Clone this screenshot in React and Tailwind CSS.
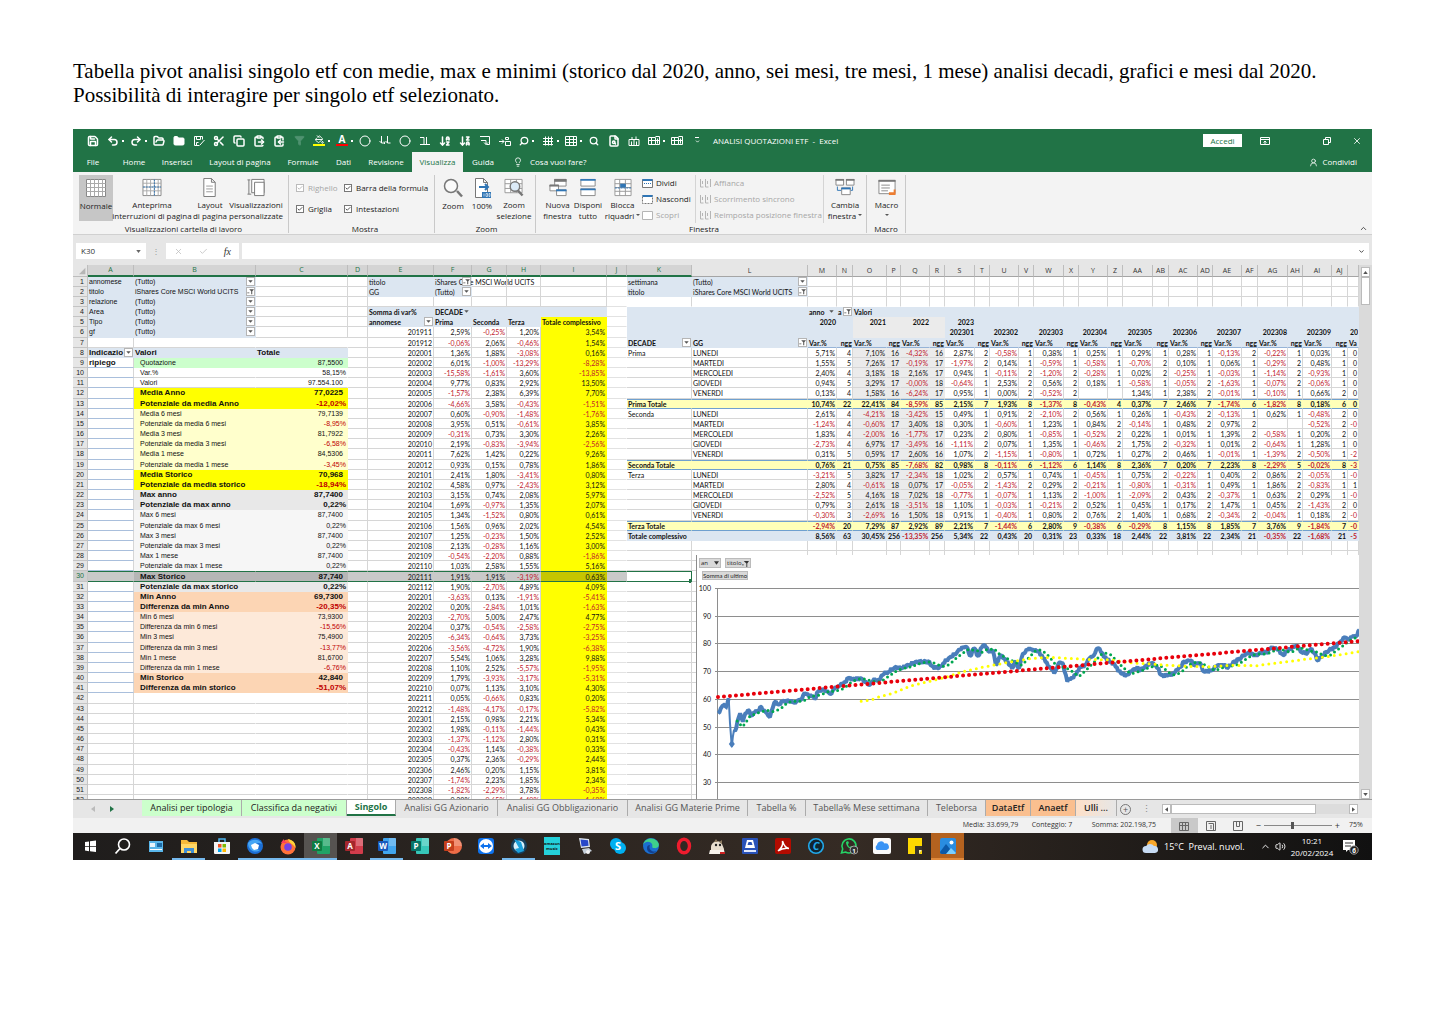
import React from "react";
import {
  Save, Undo2, Redo2, FolderOpen, Folder, Scissors, Copy, ClipboardPaste, ClipboardCopy, Filter, PaintBucket,
  Circle, ArrowDownAZ, ArrowDownZA, Search, Lightbulb, UserRound, X, Check,
  ChevronUp, ChevronDown, Volume2, FileSearch,
} from "lucide-react";

/* ---------- sheet data ---------- */

const COLS = [
  ["A", "w-[46px]"], ["B", "w-[122px]"], ["C", "w-[92px]"], ["D", "w-[20px]"], ["E", "w-[66px]"], ["F", "w-[38px]"],
  ["G", "w-[35px]"], ["H", "w-[34px]"], ["I", "w-[66px]"], ["J", "w-[20px]"], ["K", "w-[65px]"], ["L", "w-[116px]"],
  ["M", "w-[29px]"], ["N", "w-[16px]"], ["O", "w-[34px]"], ["P", "w-[14px]"], ["Q", "w-[29px]"], ["R", "w-[15px]"],
  ["S", "w-[30px]"], ["T", "w-[15px]"], ["U", "w-[29px]"], ["V", "w-[15px]"], ["W", "w-[30px]"], ["X", "w-[15px]"],
  ["Y", "w-[29px]"], ["Z", "w-[15px]"], ["AA", "w-[30px]"], ["AB", "w-[16px]"], ["AC", "w-[29px]"], ["AD", "w-[15px]"],
  ["AE", "w-[29px]"], ["AF", "w-[16px]"], ["AG", "w-[30px]"], ["AH", "w-[15px]"], ["AI", "w-[29px]"], ["AJ", "w-[16px]"],
  ["AK", ""],
];
const NAMES = COLS.map((c) => c[0]);

const SUMMARY = [
  ["Quotazione", "87,5500", "green"],
  ["Var.%", "58,15%", "plain"],
  ["Valori", "97.554.100", "plain"],
  ["Media Anno", "77,0225", "yellow"],
  ["Potenziale da media Anno", "-12,02%", "yellow"],
  ["Media 6 mesi", "79,7139", "cream"],
  ["Potenziale da media 6 mesi", "-8,95%", "cream"],
  ["Media 3 mesi", "81,7922", "cream"],
  ["Potenziale da media 3 mesi", "-6,58%", "cream"],
  ["Media 1 mese", "84,5306", "cream"],
  ["Potenziale da media 1 mese", "-3,45%", "cream"],
  ["Media Storico", "70,968", "yellow"],
  ["Potenziale da media storico", "-18,94%", "yellow"],
  ["Max anno", "87,7400", "gray"],
  ["Potenziale da max anno", "0,22%", "gray"],
  ["Max 6 mesi", "87,7400", "light"],
  ["Potenziale da max 6 mesi", "0,22%", "light"],
  ["Max 3 mesi", "87,7400", "light"],
  ["Potenziale da max 3 mesi", "0,22%", "light"],
  ["Max 1 mese", "87,7400", "light"],
  ["Potenziale da max 1 mese", "0,22%", "light"],
  ["Max Storico", "87,740", "gray"],
  ["Potenziale da max storico", "0,22%", "gray"],
  ["Min Anno", "69,7300", "orange"],
  ["Differenza da min Anno", "-20,35%", "orange"],
  ["Min 6 mesi", "73,9300", "peach"],
  ["Differenza da min 6 mesi", "-15,56%", "peach"],
  ["Min 3 mesi", "75,4900", "peach"],
  ["Differenza da min 3 mesi", "-13,77%", "peach"],
  ["Min 1 mese", "81,6700", "peach"],
  ["Differenza da min 1 mese", "-6,76%", "peach"],
  ["Min Storico", "42,840", "orange"],
  ["Differenza da min storico", "-51,07%", "orange"],
];
const TONE = {
  green: "bg-[#ccffcc]", plain: "bg-white", yellow: "bg-[#ffff00] font-bold", cream: "bg-[#ffffcc]",
  gray: "bg-[#e8e8e8] font-bold", light: "bg-[#f6f6f6]", orange: "bg-[#fcd5b4] font-bold", peach: "bg-[#fde9d9]",
};

const MONTHS = `201911 2,59 -0,25 1,20 3,54
201912 -0,06 2,06 -0,46 1,54
202001 1,36 1,88 -3,08 0,16
202002 6,01 -1,00 -13,29 -8,28
202003 -15,58 -1,61 3,60 -13,85
202004 9,77 0,83 2,92 13,50
202005 -1,57 2,38 6,39 7,70
202006 -4,66 3,58 -0,43 -1,51
202007 0,60 -0,90 -1,48 -1,76
202008 3,95 0,51 -0,61 3,85
202009 -0,31 0,73 3,30 2,26
202010 2,19 -0,83 -3,94 -2,56
202011 7,62 1,42 0,22 9,26
202012 0,93 0,15 0,78 1,86
202101 2,41 1,80 -3,41 0,80
202102 4,58 0,97 -2,43 3,12
202103 3,15 0,74 2,08 5,97
202104 1,69 -0,97 1,35 2,07
202105 1,34 -1,52 0,80 0,61
202106 1,56 0,96 2,02 4,54
202107 1,25 -0,23 1,50 2,52
202108 2,13 -0,28 1,16 3,00
202109 -0,54 -2,20 0,88 -1,86
202110 1,03 2,58 1,55 5,16
202111 1,91 1,91 -3,19 0,63
202112 1,90 -2,70 4,89 4,09
202201 -3,63 0,13 -1,91 -5,41
202202 0,20 -2,84 1,01 -1,63
202203 -2,70 5,00 2,47 4,77
202204 0,37 -0,54 -2,58 -2,75
202205 -6,34 -0,64 3,73 -3,25
202206 -3,56 -4,72 1,90 -6,38
202207 5,54 1,06 3,28 9,88
202208 1,10 2,52 -5,57 -1,95
202209 1,79 -3,93 -3,17 -5,31
202210 0,07 1,13 3,10 4,30
202211 0,05 -0,66 0,83 0,20
202212 -1,48 -4,17 -0,17 -5,82
202301 2,15 0,98 2,21 5,34
202302 1,98 -0,11 -1,44 0,43
202303 -1,37 -1,12 2,80 0,31
202304 -0,43 1,14 -0,38 0,33
202305 0,37 2,36 -0,29 2,44
202306 2,46 0,20 1,15 3,81
202307 -1,74 2,23 1,85 2,34
202308 -1,82 -2,29 3,78 -0,35
202309 0,38 -0,65 -1,40 -1,68`.split("\n").map((l) => l.split(" "));

const DAYS = `5,71 4 7,10 16 -4,32 16 2,87 2 -0,58 1 0,38 1 0,25 1 0,29 1 0,28 1 -0,13 2 -0,22 1 0,03 1 0
1,55 5 7,26 17 -0,19 17 -1,97 2 0,14 1 -0,59 1 -0,58 1 -0,70 2 0,10 1 0,06 1 -0,29 2 0,48 1 0
2,40 4 3,18 18 2,16 17 0,94 1 -0,11 2 -1,20 2 -0,28 1 0,02 2 -0,25 1 -0,03 1 -1,14 2 -0,93 1 0
0,94 5 3,29 17 -0,00 18 -0,64 1 2,53 2 0,56 2 0,18 1 -0,58 1 -0,05 2 -1,63 1 -0,07 2 -0,06 1 0
0,13 4 1,58 16 -6,24 17 0,95 1 0,00 2 -0,52 2 . . 1,34 1 2,38 2 -0,01 1 -0,10 1 0,66 2 0
10,74 22 22,41 84 -8,59 85 2,15 7 1,93 8 -1,37 8 -0,43 4 0,37 7 2,46 7 -1,74 6 -1,82 8 0,18 6 0
2,61 4 -4,21 18 -3,42 15 0,49 1 0,91 2 -2,10 2 0,56 1 0,26 1 -0,43 2 -0,13 1 0,62 1 -0,48 2 0
-1,24 4 -0,60 17 3,40 18 0,30 1 -0,60 1 1,23 1 0,84 2 -0,14 1 0,48 2 0,97 2 . . -0,52 2 -0
1,83 4 -2,00 16 -1,77 17 0,23 2 0,80 1 -0,85 1 -0,52 2 0,22 1 0,01 1 1,39 2 -0,58 1 0,20 2 0
-2,73 4 6,97 17 -3,49 16 -1,11 2 0,07 1 1,35 1 -0,46 2 1,75 2 -0,32 1 0,01 2 -0,64 1 1,28 1 0
0,31 5 0,59 17 2,60 16 1,07 2 -1,15 1 -0,80 1 0,72 1 0,27 2 0,46 1 -0,01 1 -1,39 2 -0,50 1 -2
0,76 21 0,75 85 -7,68 82 0,98 8 -0,11 6 -1,12 6 1,14 8 2,36 7 0,20 7 2,23 8 -2,29 5 -0,02 8 -3
-3,21 5 3,82 17 -2,34 18 1,02 2 0,57 1 0,74 1 -0,45 1 0,75 2 -0,22 1 0,40 2 0,86 2 -0,05 1 -0
2,80 4 -0,61 18 0,07 17 -0,05 2 -1,43 2 0,29 2 -0,21 1 -0,80 1 -0,31 1 0,49 1 1,86 2 -0,83 1 1
-2,52 5 4,16 18 7,02 18 -0,77 1 -0,07 1 1,13 2 -1,00 1 -2,09 2 0,43 2 -0,37 1 0,63 2 0,29 1 -0
0,79 3 2,61 18 -3,51 18 1,10 1 -0,03 1 -0,21 2 0,52 1 0,45 1 0,17 2 1,47 1 0,45 2 -1,43 2 0
-0,30 3 -2,69 16 1,50 18 0,91 1 -0,40 1 0,80 2 0,76 2 1,40 1 0,68 2 -0,34 2 -0,04 1 0,18 2 -0
-2,94 20 7,29 87 2,92 89 2,21 7 -1,44 6 2,80 9 -0,38 6 -0,29 8 1,15 8 1,85 7 3,76 9 -1,84 7 -0
8,56 63 30,45 256 -13,35 256 5,34 22 0,43 20 0,31 23 0,33 18 2,44 22 3,81 22 2,34 21 -0,35 22 -1,68 21 -5`
  .split("\n").map((l) => l.split(" "));
const DAY_NAMES = ["LUNEDI", "MARTEDI", "MERCOLEDI", "GIOVEDI", "VENERDI"];

const TEXT = {
  A1: "annomese", B1: "(Tutto)", A2: "titolo", B2: "iShares Core MSCI World UCITS", A3: "relazione", B3: "(Tutto)",
  A4: "Area", B4: "(Tutto)", A5: "Tipo", B5: "(Tutto)", A6: "gf", B6: "(Tutto)",
  A8: "Indicazio", B8: "Valori", C8: "Totale", A9: "ripiego",
  E1: "titolo", F1: "iShares Core MSCI World UCITS", E2: "GG", F2: "(Tutto)", E4: "Somma di var%", F4: "DECADE",
  E5: "annomese", F5: "Prima", G5: "Seconda", H5: "Terza", I5: "Totale complessivo",
  K1: "settimana", L1: "(Tutto)", K2: "titolo", L2: "iShares Core MSCI World UCITS",
  M4: "anno", N4: "a", O4: "Valori", K7: "DECADE", L7: "GG",
  M5: "2020", O5: "2021", Q5: "2022", S5: "2023",
  K8: "Prima", K13: "Prima Totale", K14: "Seconda", K19: "Seconda Totale", K20: "Terza", K25: "Terza Totale",
  K26: "Totale complessivo",
};
"S U W Y AA AC AE AG AI".split(" ").forEach((c, i) => { TEXT[c + "6"] = "20230" + (i + 1); });
TEXT.AK6 = "20";
[8, 14, 20].forEach((start) => DAY_NAMES.forEach((d, i) => { TEXT["L" + (start + i)] = d; }));
const FILTERS = {
  B1: "v", B2: "f", B3: "v", B4: "v", B5: "v", B6: "v", A8: "v", F1: "f", F2: "v", F4: "n", E5: "v",
  L1: "v", L2: "f", M4: "n", N4: "f", K7: "v", L7: "f",
};

function cellInfo(col, row) {
  const c = NAMES.indexOf(col);
  const key = col + row;
  let text = TEXT[key] ?? "";
  let cls = "";
  let grid = "border-b-[#d6d6d6] border-r-[#d6d6d6]";
  const none = "border-transparent bg-clip-border";
  const blue = "bg-[#dce6f1]";

  if (c <= 2) {
    let size = "text-[8px]";
    cls = "font-['Liberation_Sans',sans-serif]";
    if (row <= 6) {
      if (c < 2) { size = "text-[7px]"; cls += " " + blue; grid = none; }
    } else if (row === 8) { cls += " font-bold " + blue; grid = none; }
    else if (row >= 9 && row <= 41) {
      if (c === 0) { grid = "border-b-[#a9bfdc] border-r-[#d6d6d6]"; if (row === 9) cls += " font-bold"; }
      else {
        const [label, val, tone] = SUMMARY[row - 9];
        text = c === 1 ? label : val;
        const bold = TONE[tone].includes("bold");
        if (!bold) size = "text-[7px]";
        cls += " " + TONE[tone] + (c === 1 ? " pl-[6px]" : " text-right");
        if (c === 2) cls += val.endsWith("%") ? " pr-[1px]" : " pr-[4px]";
        if (c === 2 && val[0] === "-") cls += " text-[#c00000]";
        grid = row === 10 || row === 11 ? "border-b-[#d6d6d6] border-r-transparent" : none;
      }
    } else if (c > 0) grid = "border-b-[#d6d6d6] border-r-transparent";
    cls += " " + size;
  } else {
    cls = "font-['Lato',sans-serif] text-[7px]";
    if (c >= 4 && c <= 8) {
      if ((row <= 2 && c <= 5) || row === 4 || (row === 5 && c < 8)) { cls += " " + blue; grid = none; }
      if (row === 4 || row === 5) cls += " font-bold";
      if (row >= 6) {
        const v = MONTHS[row - 6][c - 4];
        text = c === 4 ? v : v + "%";
        cls += " text-right pr-[1px]" + (v[0] === "-" ? " text-[#c0202c]" : "");
      }
      if (c === 8 && row >= 5) { cls += " bg-[#ffff00]"; grid = none; }
    }
    if (c === 9) grid = "border-b-[#e2e2e2] border-r-transparent";
    if (c >= 10) {
      if (row <= 2 && c <= 11) { cls += " " + blue; grid = none; }
      if (row >= 4 && row <= 7) { cls += " font-bold " + blue; grid = none; }
      if ((row === 5 || row === 6) && c >= 12) cls += " text-right";
      if (row === 7 && c >= 12) {
        text = c === 36 ? "Va" : c % 2 === 0 ? "Var.%" : "ngg";
        if (c % 2) cls += " text-right";
        grid = "border-b-[#95b3d7] border-r-transparent";
      }
      if (row >= 8 && row <= 26) {
        const total = row === 13 || row === 19 || row === 25;
        if (c >= 12) {
          const v = DAYS[row - 8][c - 12];
          const pct = c % 2 === 0 && c !== 36;
          text = v === "." ? "" : pct ? v + "%" : v;
          cls += " text-right pr-[1px]" + (v[0] === "-" ? " text-[#c0202c]" : "");
        }
        if (total) { cls += " font-bold bg-[#ffffb8] border-t border-t-[#6fa0cf]"; grid = "border-b-[#6fa0cf] border-r-transparent"; }
        if (row === 26) { cls += " font-bold " + blue; grid = none; }
      }
      if ((row === 5 || row === 6 || (row >= 8 && row <= 24 && row !== 13 && row !== 19)) && c >= 14 && c <= 17) {
        cls = cls.replace(blue, "") + " bg-[#ebebeb]";
        if (row >= 8) grid = "border-b-[#d6d6d6] border-r-transparent";
      }
      if (row === 3) grid = "border-b-transparent border-r-[#d6d6d6]";
    }
  }
  if (row === 30 && c <= 10) {
    grid = "border-b-[#217346] border-t border-t-[#217346] " + (c === 10 ? "border-r-[#217346]" : "border-r-transparent");
    cls = cls.replace(/bg-\[#[0-9a-f]+\]/g, "");
    cls += c === 1 || c === 2 ? " bg-[#b6b6b6]" : c === 8 ? " bg-[#c6c600]" : c === 10 ? " bg-white" : " bg-[#c9c9c9]";
  }
  return { text, cls, grid };
}

function FilterButton({ kind, name }) {
  return (
    <button aria-label={"Filtro " + name} className={"absolute right-0 top-0 flex h-[9px] w-[9px] items-center justify-center " + (kind === "n" ? "" : "border border-[#b5b5b5] bg-white")}>
      {kind === "f" ? (
        <svg viewBox="0 0 8 8" className="h-[7px] w-[7px]" fill="#555"><path d="M2.5 1.5h5.5l-2 2.2V7h-1.2V3.700zM.3 5h2.400v1H.3z" /></svg>
      ) : (
        <svg viewBox="0 0 8 8" className="h-[7px] w-[7px]" fill="#555"><path d="M1.500 2.500h5L4 5.500z" /></svg>
      )}
    </button>
  );
}

function Sheet() {
  return (
    <table className="-mb-[6px] w-full table-fixed border-separate border-spacing-0 bg-white text-[#111]">
      <colgroup>
        <col className="w-[15px]" />
        {COLS.map(([n, w]) => <col key={n} className={w} />)}
      </colgroup>
      <thead>
        <tr className="h-[12px] font-['Open_Sans',sans-serif] text-[7px] leading-[10px] text-[#333]">
          <th className="border-b border-r border-[#bdbdbd] bg-[#e6e6e6] p-0">
            <svg viewBox="0 0 15 10" className="ml-auto h-[8px] w-[12px]" fill="#b5b5b5"><path d="M13 1v8H5z" /></svg>
          </th>
          {NAMES.map((n, i) => (
            <th key={n} scope="col" className={"overflow-hidden border-r border-r-[#bdbdbd] p-0 font-normal " + (i <= 10 ? "border-b-2 border-b-[#217346] bg-[#d4d4d4] text-[#217346]" : "border-b border-b-[#a5a5a5] bg-[#e6e6e6]")}>
              {n === "AK" ? "" : n}
            </th>
          ))}
        </tr>
      </thead>
      <tbody>
        {Array.from({ length: 52 }, (_, i) => i + 1).map((row) => (
          <tr key={row} className={row % 6 === 0 ? "h-[11px]" : "h-[10px]"}>
            <th scope="row" className={"border-b border-r border-[#c4c4c4] p-0 pr-[3px] text-right font-['Liberation_Sans',sans-serif] text-[7px] font-normal leading-[8px] " + (row === 30 ? "bg-[#d0d0d0] text-[#217346]" : "bg-[#e6e6e6] text-[#222]")}>{row}</th>
            {NAMES.map((col) => {
              const { text, cls, grid } = cellInfo(col, row);
              const kind = FILTERS[col + row];
              return (
                <td key={col} className={"relative whitespace-nowrap border-b border-r p-0 pl-[1px] leading-[8px] " + cls + " " + grid + (col === "AK" ? " overflow-hidden" : "")}>
                  {text}
                  {kind && <FilterButton kind={kind} name={col + row} />}
                  {col === "K" && row === 30 && <span className="absolute -bottom-[2px] -right-[1px] h-[4px] w-[3px] bg-[#217346]" />}
                </td>
              );
            })}
          </tr>
        ))}
      </tbody>
    </table>
  );
}

/* ---------- chart ---------- */

const PRICE = [62,490,68,475,75,465,80,470,86,445,89,520,93,590,98,540,103,535,108,505,112,490,118,515,124,490,130,480,136,495,145,488,152,485,158,470,166,480,173,490,180,502,186,475,190,458,200,462,210,455,222,452,232,458,240,455,250,450,256,435,265,430,275,440,282,447,290,425,298,418,310,422,320,432,330,410,340,408,350,395,360,385,372,388,388,385,398,395,405,405,415,392,428,388,440,372,450,365,465,352,480,355,495,345,510,338,525,335,540,335,552,350,565,355,575,340,590,322,605,310,618,290,628,290,636,318,645,295,655,318,663,292,670,285,678,305,688,300,695,345,705,318,715,325,725,345,732,355,740,335,748,355,757,310,768,300,778,297,790,305,800,315,808,335,818,350,828,370,838,340,848,340,858,395,868,382,878,375,886,350,895,352,905,330,915,320,928,295,938,310,948,330,958,335,968,350,980,370,992,375,1005,365,1018,350,1025,362,1038,345,1050,340,1060,345,1072,375,1085,378,1098,370,1110,360,1125,335,1138,332,1148,345,1160,338,1170,365,1185,362,1198,350,1210,342,1225,352,1240,335,1255,322,1265,310,1278,310,1290,318,1300,308,1315,305,1325,290,1338,300,1350,315,1362,300,1380,285,1390,305,1405,310,1415,295,1430,332,1440,315,1455,300,1468,292,1478,280,1488,262,1497,268,1508,262,1516,258,1524,240];
const SLOW = [388,454,410,450,430,440,460,430,500,408,540,395,580,382,620,365,660,353,700,343,740,333,780,325,820,322,860,325,900,328,960,330,1000,338,1050,342,1090,346,1130,349,1180,350,1230,346,1290,347,1340,338,1400,328,1450,320,1500,310,1530,303];
const toXY = (a) => a.reduce((out, v, i) => (i % 2 ? out : [...out, [v / 2.28 - 6, a[i + 1] / 3 - 5]]), []);
const pts = (list) => list.map((p) => p[0].toFixed(1) + "," + p[1].toFixed(1)).join(" ");

const pricePts = toXY(PRICE);
const dense = [];
pricePts.forEach((p, i) => {
  const q = pricePts[i + 1];
  dense.push(p);
  if (!q) return;
  const n = Math.max(1, Math.round((q[0] - p[0]) / 1.3));
  for (let k = 1; k < n; k++) {
    const t = k / n;
    dense.push([p[0] + (q[0] - p[0]) * t, p[1] + (q[1] - p[1]) * t + Math.sin((i * 7 + k) * 2.3) * 1.8]);
  }
});
const average = dense.map((p, i) => {
  const w = dense.slice(Math.max(0, i - 9), i + 1);
  return [p[0] + 1, w.reduce((s, v) => s + v[1], 0) / w.length];
}).filter((p, i) => i > 12 && i % 2 === 0 && p[0] < 660);

function Chart() {
  return (
    <section aria-label="Grafico quotazioni" className="absolute bottom-0 left-[623px] right-0 top-[290px] overflow-hidden border-l border-[#8c8c8c] bg-white">
      <div className="flex gap-1 pl-[2px] pt-[3px] font-['Open_Sans',sans-serif] text-[6px] leading-[8px] text-[#222]">
        <button className="flex w-[22px] items-center justify-between border border-[#bbb] bg-[#d9d9d9] px-px">an<svg viewBox="0 0 6 4" className="h-1 w-[5px]"><path d="M0 0h6L3 4z" fill="#333" /></svg></button>
        <button className="flex w-[26px] items-center justify-between border border-[#bbb] bg-[#d9d9d9] px-px">titolo<svg viewBox="0 0 8 8" className="h-[7px] w-[7px]"><path d="M2 1h6L6 4v4H5V4zM0 5h2v1H0z" fill="#333" /></svg></button>
      </div>
      <button className="ml-[5px] mt-[3px] block whitespace-nowrap border border-[#bbb] bg-[#d9d9d9] font-['Lato',sans-serif] text-[6px] leading-[7px] text-[#222]">Somma di ultimo</button>
      <svg viewBox="0 0 662 246" preserveAspectRatio="xMinYMin slice" className="pointer-events-none absolute left-0 top-0 h-[246px] w-full">
        {[100, 90, 80, 70, 60, 50, 40, 30].map((n, i) => {
          const y = Math.round(33 + i * 27.7);
          return (
            <g key={n}>
              <path d={`M18 ${y + 0.5}H662`} stroke="#8e8e8e" />
              <text x="14" y={y + 3} textAnchor="end" fontSize="7" fontFamily="Lato, sans-serif" fill="#111">{n}</text>
            </g>
          );
        })}
        <path d="M20.500 33V246" stroke="#8e8e8e" />
        <polyline points={pts(dense.filter((p) => p[1] < 163 && p[0] < 32))} fill="none" stroke="#4a7ebb" strokeWidth="4" />
        <polyline points={pts(dense.filter((p) => p[0] < 38))} fill="none" stroke="#4a7ebb" strokeWidth="2" />
        <polyline points={pts(dense.filter((p) => p[0] >= 36))} fill="none" stroke="#4a7ebb" strokeWidth="4" strokeLinejoin="bevel" />
        <path d="M34.800 185l3 4-3 4-3-4z" fill="#4a7ebb" />
        <polyline points={pts(average)} fill="none" stroke="#00a650" strokeWidth="3" strokeLinecap="round" strokeDasharray="0 5" />
        <polyline points={pts(toXY(SLOW))} fill="none" stroke="#ffff00" strokeWidth="3" strokeLinecap="round" strokeDasharray="0 6" />
        <polyline points="21,142 662,86" fill="none" stroke="#e8000b" strokeWidth="4" strokeLinecap="round" strokeDasharray="0 6" />
      </svg>
    </section>
  );
}

/* ---------- title bar and ribbon ---------- */

const FillIcon = () => (
  <span className="flex flex-col items-center"><PaintBucket size={9} strokeWidth={2.5} /><span className="h-[2px] w-[12px] bg-[#ffff00]" /></span>
);
const FontIcon = () => (
  <span className="flex flex-col items-center text-[10px] font-bold leading-[9px]">A<span className="h-[2px] w-[12px] bg-[#ff0000]" /></span>
);
const GLYPHS = {
  saveAs: "M1.500 1.500v9h5M1.500 1.500h8v3M3.500 1.500v3h4v-3M3.500 10.500v-3h2M7 10l4.500-5",
  arrows: "M2.500 1v7h3M8.500 1v7h3M.5 6l2 2M6.500 6l2 2M5 6.500l1 1.500-1 1",
  box: "M1 2.500h4v7H1M5 9.500h6M7.500 2v7.500",
  wrap: "M1 1.500h9.500v8h-3M2 5.500h5v4M5 7.500l2 2 2-2",
  sort: "M0 6.500h5M3 4.500l2 2-2 2M6.500 2.500h3v2h-3zM6.500 6.500h5v4h-5z",
  cells: "M1 3.500h10M1 6.500h10M1 9.500h10M3.500 1.500v9M6.500 1.500v9M9.500 1.500v9",
  grid: "M.5 1.500h11v9H.5zM.5 4.500h11M.5 7.500h11M4.500 1.500v9M8.500 1.500v9",
  camera: "M1 4.500h10v6H1zM3.500 6.500v4M6 5v5M8.500 6.500v4M4 4V2M8 4V1.500",
  table: "M.5 2.500h7v7h-7zM.5 5.500h11M3.500 2.500v7M7.500 1.500h4v8h-4M9.500 3.500v5",
};
const Glyph = ({ name }) => (
  <svg viewBox="0 0 12 12" className="h-3 w-3 shrink-0" stroke="currentColor" fill="none"><path d={GLYPHS[name]} /></svg>
);
const QAT = [
  [Save], [Undo2, 1], [Redo2, 1], [FolderOpen], ["folder"], ["saveAs"], [Scissors], [Copy], [ClipboardPaste], [ClipboardCopy], ["dim"],
  ["fill", 1], ["font", 1], [Circle], ["arrows"], [Circle], ["box"], [ArrowDownAZ], [ArrowDownZA], ["wrap"], ["sort"],
  ["mirror", 1], ["cells", 1], ["grid", 1], [Search], [FileSearch], ["camera"], ["table", 1], ["table"],
];

function QatItem({ item }) {
  const [Icon, drop] = item;
  let icon;
  if (Icon === "folder") icon = <Folder size={12} fill="currentColor" />;
  else if (Icon === "dim") icon = <Filter size={11} fill="currentColor" className="text-[#4f9270]" />;
  else if (Icon === "fill") icon = <FillIcon />;
  else if (Icon === "font") icon = <FontIcon />;
  else if (Icon === "mirror") icon = <Search size={10} strokeWidth={3} className="-scale-x-100" />;
  else if (typeof Icon === "string") icon = <Glyph name={Icon} />;
  else icon = <Icon size={Icon === Search ? 10 : 12} strokeWidth={Icon === Circle ? 2 : 3} />;
  return (
    <button className={"flex h-5 shrink-0 items-center gap-[3px] " + (drop ? "w-[23px] pl-[4px]" : "w-[20px] justify-center")}>
      {icon}
      {drop && <span className="h-[2px] w-[2px] shrink-0 bg-white" />}
    </button>
  );
}

function TitleBar() {
  return (
    <header className="bg-[#217346] text-white">
      <div className="flex h-[23px] items-center pl-[10px]">
        {QAT.map((it, i) => <QatItem key={i} item={it} />)}
        <span className="flex w-5 flex-col items-center gap-px"><span className="h-px w-1 bg-white" /><ChevronDown size={5} strokeWidth={4} /></span>
        <h1 className="ml-[6px] whitespace-nowrap text-[8px]">ANALISI QUOTAZIONI ETF&nbsp; - &nbsp;Excel</h1>
        <div className="ml-auto flex items-center">
          <button className="h-[13px] w-[39px] bg-white text-[8px] leading-[13px] text-[#217346]">Accedi</button>
          <button aria-label="Opzioni barra multifunzione" className="ml-[18px]">
            <svg viewBox="0 0 10 8" className="h-[8px] w-[10px]" fill="none" stroke="currentColor"><path d="M.5.5h9v7h-9zM.5 2.500h9M5 7V4M3.500 5.500L5 4l1.500 1.500" /></svg>
          </button>
          <button aria-label="Ripristina" className="ml-[52px]">
            <svg viewBox="0 0 10 10" className="h-[10px] w-[10px]" fill="none" stroke="currentColor"><path d="M1.500 3.500h5v5h-5zM3.500 3.500v-2h5v5h-2" /></svg>
          </button>
          <button aria-label="Chiudi" className="ml-[20px] mr-[10px]"><X size={10} /></button>
        </div>
      </div>
      <nav className="flex h-[20px] items-stretch text-[8px]">
        {[["File", "w-[40px]"], ["Home", "w-[42px]"], ["Inserisci", "w-[44px]"], ["Layout di pagina", "w-[82px]"], ["Formule", "w-[44px]"], ["Dati", "w-[37px]"], ["Revisione", "w-[48px]"]].map(([t, w]) => (
          <button key={t} className={"whitespace-nowrap " + w}>{t}</button>
        ))}
        <button className="ml-[2px] w-[51px] bg-[#f3f3f3] text-[#217346]">Visualizza</button>
        <button className="w-[40px]">Guida</button>
        <span className="ml-[10px] flex items-center gap-[7px]"><Lightbulb size={10} /><button className="whitespace-nowrap">Cosa vuoi fare?</button></span>
        <button className="ml-auto mr-[15px] flex items-center gap-1"><UserRound size={9} />Condividi</button>
      </nav>
    </header>
  );
}

const SheetGlyph = ({ accent }) => (
  <svg viewBox="0 0 22 20" className="h-5 w-[22px]" fill="#fff" stroke="#888">
    <path d="M1.500 1.500h19v17h-19z" /><path d="M1.500 5.500h19M1.500 9.500h19M1.500 13.500h19M5.500 1.500v17M9.500 1.500v17M13.500 1.500v17M17.500 1.500v17" stroke="#aaa" />
    {accent && <path d="M13.500 1.500v17M1.500 9.500h19" stroke="#2f75b5" strokeDasharray="2 1" />}
  </svg>
);
const PageGlyph = ({ arrow }) => (
  <svg viewBox="0 0 18 20" className="h-5 w-[18px]" fill="#fff" stroke="#777">
    <path d="M2.500.5h8l4 4v15h-12zM10.500.5v4h4" /><path d="M5 8.500h7M5 11.500h7M5 14.500h7" stroke={arrow ? "none" : "#999"} />
    {arrow && <path d="M6 9h9M12 6l3 3-3 3" stroke="#2f75b5" strokeWidth="2" fill="none" />}
    {arrow && <path d="M9 14h9v6H9z" fill="#2f75b5" stroke="none" />}
    {arrow && <path d="M11 15.500v3M13 15.500h1.500v3H13zM16 15.500h1v3h-1z" stroke="#fff" strokeWidth=".6" fill="none" />}
  </svg>
);
const ViewsGlyph = () => (
  <svg viewBox="0 0 20 20" className="h-5 w-5" fill="#fff" stroke="#777"><path d="M5.500 1.500h13v14h-13z" /><path d="M8.500 4.500h10v14h-10z" /><path d="M1 2h3M1 17h4M2.500 2v15" /></svg>
);
const LensGlyph = ({ sheet }) => (
  <svg viewBox="0 0 20 20" className="h-5 w-5" fill="none" stroke="#777">
    {sheet && <path d="M.5 1.500h18v14H.5zM.5 6h18M.5 11h18M6.500 1.500v14M12.500 1.500v14" stroke="#999" fill="#fff" />}
    <circle cx={sheet ? 11 : 8} cy={sheet ? 9 : 8} r={sheet ? 5 : 6.5} strokeWidth="1.500" fill={sheet ? "#dcebf8" : "#fafafa"} />
    <path d="M14 13l5 5.500" strokeWidth="2.500" />
  </svg>
);
const WindowGlyph = ({ kind }) => (
  <svg viewBox="0 0 20 20" className="h-5 w-5" fill="#fff" stroke="#888">
    {kind === "new" && <><path d="M6.500 1.500h12v7h-12z" /><path d="M6 1h13v3H6z" fill="#777" stroke="none" /><path d="M1.500 7.500h9v6h-9z" /><path d="M1 7h10v2H1z" fill="#777" stroke="none" /><path d="M8.500 12.500h10v6h-10z" /><path d="M8 12h11v2H8z" fill="#2f75b5" stroke="none" /></>}
    {kind === "tile" && <><path d="M2.500 1.500h15v7h-15zM2.500 11.500h15v7h-15z" /><path d="M2 1h16v2H2zM2 11h16v2H2z" fill="#2f75b5" stroke="none" /></>}
    {kind === "freeze" && <><path d="M1.500 1.500h17v17h-17zM1.500 6h17M1.500 10h17M1.500 14h17M6.500 1.500v17M12.500 1.500v17" stroke="#999" /><path d="M7 6h6v4H7z" fill="#2f75b5" stroke="none" /><path d="M1.500 10.500h17" stroke="#2f75b5" strokeDasharray="2 1" /></>}
    {kind === "switch" && <><path d="M.5 1.500h8v6h-8zM11.500 1.500h8v6h-8z" /><path d="M0 1h9v2H0zM11 1h9v2h-9z" fill="#777" stroke="none" /><path d="M6.500 10.500h9v7h-9z" /><path d="M6 10h10v2H6z" fill="#2f75b5" stroke="none" /><path d="M2 9v4h4M18 9v4h-2" fill="none" stroke="#2f75b5" /></>}
    {kind === "macro" && <><path d="M1.500 2.500h17v14h-17z" /><path d="M1 2h18v2H1z" fill="#777" stroke="none" /><path d="M4 7.500h9M4 10.500h9M4 13.500h7" /><path d="M12 15h5v-3h2v6h-7z" fill="#ed7d31" stroke="none" /></>}
  </svg>
);

function Big({ icon, lines, width, active, drop }) {
  return (
    <button className={"flex h-[46px] shrink-0 flex-col items-center pt-[3px] leading-[11px] " + width + (active ? " bg-[#c6c6c6]" : "")}>
      {icon}
      <span className="mt-[2px] flex flex-col items-center whitespace-nowrap">
        {lines.map((l, i) => <span key={i} className="flex h-[11px] items-center gap-[2px]">{l}{drop && i === lines.length - 1 && <svg viewBox="0 0 4 3" className="h-[3px] w-1"><path d="M0 0h4L2 2z" fill="#555" /></svg>}</span>)}
      </span>
    </button>
  );
}
function Group({ label, width, children }) {
  return (
    <section aria-label={label} className={"flex shrink-0 flex-col border-r border-[#c9c9c9] " + width}>
      <div className="flex h-[48px] shrink-0 items-start">{children}</div>
      <div className="text-center leading-[11px]">{label}</div>
    </section>
  );
}
function Tick({ label, dim }) {
  return (
    <label className={"flex h-[21px] items-center gap-[4px] whitespace-nowrap " + (dim ? "text-[#a6a6a6]" : "")}>
      <span className="relative flex">
        <input type="checkbox" defaultChecked disabled={dim} className={"h-[8px] w-[8px] appearance-none border bg-white " + (dim ? "border-[#bbb]" : "border-[#777]")} />
        <Check size={6} strokeWidth={3} className="pointer-events-none absolute left-px top-px" />
      </span>
      {label}
    </label>
  );
}
function Small({ label, dim, kind }) {
  const c = dim ? "#b5b5b5" : "#2f75b5";
  return (
    <button className={"flex h-[16px] items-center gap-[3px] whitespace-nowrap " + (dim ? "text-[#a6a6a6]" : "")}>
      <svg viewBox="0 0 11 10" className="h-[10px] w-[11px]" fill={kind === "pair" ? "none" : "#fff"} stroke={dim ? "#b5b5b5" : "#777"}>
        {kind === "pair" ? <path d="M.5 1v8h3M5.500 1v8h3M10.500 1v8M2.500 3v3M7.500 3v3" /> : <path d="M.5 1.500h10v8H.5z" strokeDasharray={kind === "hide" ? "2 1" : "none"} />}
        {kind !== "pair" && !dim && <path d="M.5 2h10" stroke={c} strokeWidth="2" />}
        {kind === "split" && <path d="M2 5.500h7" stroke={c} strokeDasharray="1 1" />}
      </svg>
      {label}
    </button>
  );
}

function Ribbon() {
  return (
    <div className="flex h-[63px] border-b border-[#d0d0d0] bg-[#f3f3f3] pb-[1px] pt-[3px] text-[8px] text-[#222]">
      <Group label="Visualizzazioni cartella di lavoro" width="w-[216px] pl-[6px]">
        <Big width="w-[34px]" active icon={<SheetGlyph />} lines={["Normale"]} />
        <Big width="w-[78px]" icon={<SheetGlyph accent />} lines={["Anteprima", "interruzioni di pagina"]} />
        <Big width="w-[38px]" icon={<PageGlyph />} lines={["Layout", "di pagina"]} />
        <Big width="w-[54px]" icon={<ViewsGlyph />} lines={["Visualizzazioni", "personalizzate"]} />
      </Group>
      <Group label="Mostra" width="w-[146px] pl-[7px]">
        <div className="grid grid-cols-[48px_90px] pt-[2px]">
          <Tick label="Righello" dim /><Tick label="Barra della formula" /><Tick label="Griglia" /><Tick label="Intestazioni" />
        </div>
      </Group>
      <Group label="Zoom" width="w-[101px] pl-[3px]">
        <Big width="w-[30px]" icon={<LensGlyph />} lines={["Zoom"]} />
        <Big width="w-[28px]" icon={<PageGlyph arrow />} lines={["100%"]} />
        <Big width="w-[36px]" icon={<LensGlyph sheet />} lines={["Zoom", "selezione"]} />
      </Group>
      <Group label="Finestra" width="w-[331px] pl-[6px]">
        <Big width="w-[31px]" icon={<WindowGlyph kind="new" />} lines={["Nuova", "finestra"]} />
        <Big width="w-[30px]" icon={<WindowGlyph kind="tile" />} lines={["Disponi", "tutto"]} />
        <Big width="w-[39px]" icon={<WindowGlyph kind="freeze" />} lines={["Blocca", "riquadri"]} drop />
        <div className="flex w-[54px] flex-col border-r border-[#d4d4d4]"><Small label="Dividi" kind="split" /><Small label="Nascondi" kind="hide" /><Small label="Scopri" dim /></div>
        <div className="flex w-[128px] flex-col border-r border-[#d4d4d4] pl-1"><Small label="Affianca" dim kind="pair" /><Small label="Scorrimento sincrono" dim kind="pair" /><Small label="Reimposta posizione finestra" dim kind="pair" /></div>
        <Big width="w-[42px]" icon={<WindowGlyph kind="switch" />} lines={["Cambia", "finestra"]} drop />
      </Group>
      <Group label="Macro" width="w-[39px]"><Big width="w-[39px]" icon={<WindowGlyph kind="macro" />} lines={["Macro", ""]} drop /></Group>
      <button aria-label="Comprimi barra" className="ml-auto mr-[4px] self-end"><ChevronUp size={9} /></button>
    </div>
  );
}

function FormulaBar() {
  return (
    <div className="flex h-[30px] items-center bg-[#e6e6e6] px-[3px] pt-[2px] text-[8px] text-[#333]">
      <div className="flex h-4 w-[70px] items-center bg-white pr-[5px]">
        <input aria-label="Casella nome" defaultValue="K30" className="w-full min-w-0 bg-transparent pl-[5px] outline-none" />
        <svg viewBox="0 0 6 4" className="h-[3px] w-[5px] shrink-0"><path d="M0 0h6L3 4z" fill="#666" /></svg>
      </div>
      <span className="w-5 text-center text-[#999]">⋮</span>
      <div className="flex h-4 w-[73px] items-center justify-around bg-white">
        <button aria-label="Annulla" className="text-[#bbb]"><X size={9} /></button>
        <button aria-label="Invio" className="text-[#bbb]"><Check size={9} /></button>
        <button aria-label="Inserisci funzione" className="font-['Liberation_Serif',serif] text-[10px] italic">fx</button>
      </div>
      <div className="ml-[3px] flex h-4 flex-1 items-center bg-white pr-[4px]">
        <input aria-label="Barra della formula" className="min-w-0 flex-1 bg-transparent px-1 outline-none" />
        <ChevronDown size={7} strokeWidth={3} />
      </div>
    </div>
  );
}

/* ---------- bottom bars ---------- */

const TABS = [
  ["Analisi per tipologia", "w-[100px] bg-[#ccffcc] text-[#222]"], ["Classifica da negativi", "w-[105px] bg-[#ccffcc] text-[#222]"],
  ["Singolo", "w-[49px] bg-white font-bold text-[#217346] border-b-2 border-b-[#217346]"], ["Analisi GG Azionario", "w-[102px]"],
  ["Analisi GG Obbligazionario", "w-[130px]"], ["Analisi GG Materie Prime", "w-[120px]"], ["Tabella %", "w-[58px]"],
  ["Tabella% Mese settimana", "w-[122px]"], ["Teleborsa", "w-[58px]"], ["DataEtf", "w-[45px] bg-[#fabf8f] text-[#222] font-semibold"],
  ["Anaetf", "w-[45px] bg-[#fabf8f] text-[#222] font-semibold"], ["Ulli ...", "w-[41px] bg-linear-to-r from-[#fde0c8] to-[#e6e6e6] text-[#222] font-semibold"],
];

function SheetTabs() {
  return (
    <div className="flex h-[19px] items-stretch border-t border-[#9a9a9a] bg-[#e6e6e6] text-[9px] text-[#555]">
      <div className="flex w-[69px] items-center gap-[15px] pl-[18px]">
        <button aria-label="Precedente"><svg viewBox="0 0 4 6" className="h-[6px] w-1"><path d="M4 0v6L0 3z" fill="#bbb" /></svg></button>
        <button aria-label="Successivo"><svg viewBox="0 0 4 6" className="h-[6px] w-1"><path d="M0 0v6l4-3z" fill="#217346" /></svg></button>
      </div>
      <div role="tablist" className="flex items-stretch">
        {TABS.map(([t, c]) => <button key={t} role="tab" aria-selected={t === "Singolo"} className={"mb-[2px] whitespace-nowrap border-r border-[#ababab] " + c}>{t}</button>)}
      </div>
      <button aria-label="Nuovo foglio" className="ml-[3px] flex h-[11px] w-[11px] items-center justify-center self-center rounded-full border border-[#777] text-[9px] leading-none">+</button>
      <span className="mx-[11px] self-center text-[#888]">⋮</span>
      <div className="mr-[14px] flex flex-1 items-center justify-between self-center bg-[#dcdcdc]">
        <button aria-label="Sinistra" className="flex h-[10px] w-[9px] items-center justify-center border border-[#bbb] bg-white"><svg viewBox="0 0 4 6" className="h-[5px] w-[3px]"><path d="M4 0v6L0 3z" fill="#555" /></svg></button>
        <span className="h-[10px] w-[145px] border border-[#bbb] bg-white" />
        <span className="flex-1" />
        <button aria-label="Destra" className="flex h-[10px] w-[9px] items-center justify-center border border-[#bbb] bg-white"><svg viewBox="0 0 4 6" className="h-[5px] w-[3px]"><path d="M0 0v6l4-3z" fill="#555" /></svg></button>
      </div>
    </div>
  );
}

const ViewIcon = ({ d }) => <svg viewBox="0 0 10 10" className="h-[10px] w-[10px]" fill="none" stroke="#666"><path d={d} /></svg>;

function StatusBar() {
  return (
    <div className="flex h-[15px] items-center justify-end bg-[#f1f1f1] text-[7px] text-[#333]">
      <span className="w-[69px]">Media: 33.699,79</span>
      <span className="w-[60px]">Conteggio: 7</span>
      <span className="w-[79px]">Somma: 202.198,75</span>
      <button aria-label="Normale" className="flex h-full w-[27px] items-center justify-center bg-[#c9c9c9]"><ViewIcon d="M.5 1.500h9v8h-9zM.5 4.500h9M3.500 1.500v8M6.500 1.500v8" /></button>
      <button aria-label="Layout di pagina" className="flex w-[26px] justify-center"><ViewIcon d="M.5.5h9v9h-9zM2.500 2.500h5v7M4 5h2M4 7h2" /></button>
      <button aria-label="Anteprima interruzioni" className="flex w-[28px] justify-center"><ViewIcon d="M.5.5h9v9h-9zM3.500.5v5h3v-5" /></button>
      <span className="ml-[4px] text-[9px] leading-none">−</span>
      <input aria-label="Zoom" type="range" defaultValue="42" className="mx-[3px] h-[8px] w-[68px] appearance-none bg-[linear-gradient(#888,#888)] bg-[length:100%_1px] bg-center bg-no-repeat [&::-webkit-slider-thumb]:h-[7px] [&::-webkit-slider-thumb]:w-[3px] [&::-webkit-slider-thumb]:appearance-none [&::-webkit-slider-thumb]:bg-[#555]" />
      <span className="text-[9px] leading-none">+</span>
      <span className="ml-[9px] w-[23px]">75%</span>
    </div>
  );
}

const Letter = ({ l, dark, light, round }) => (
  <svg viewBox="0 0 18 18" className="h-[18px] w-[18px]">
    {round ? <circle cx="10" cy="9" r="8" fill={light} /> : <rect x="5" y="1" width="13" height="16" rx="1" fill={light} />}
    <path d={round ? "M10 1a8 8 0 0 1 8 8h-8z" : "M11 1h7v8h-7z"} fill="#fff" fillOpacity=".25" />
    <rect x="0" y="4" width="10" height="10" rx="1" fill={dark} />
    <text x="5" y="12" fontSize="8" fontWeight="700" fill="#fff" textAnchor="middle" fontFamily="Open Sans, sans-serif">{l}</text>
  </svg>
);
const S = ({ children }) => <svg viewBox="0 0 18 18" className="h-[18px] w-[18px]">{children}</svg>;
const T = (p) => <text textAnchor="middle" fontFamily="Open Sans, sans-serif" fontWeight="700" {...p} />;

const APPS = [
  ["Start", <S><path d="M4 5l4-.6V9H4zM9 4.200L15 3.500V9H9zM4 9.700h4v4.500L4 13.600zM9 9.700h6v5.300l-6-.7z" fill="#fff" /></S>],
  ["Cerca", <S><circle cx="10" cy="7.500" r="5.500" fill="none" stroke="#fff" strokeWidth="1.600" /><path d="M6 11.500l-4.500 5" stroke="#fff" strokeWidth="1.800" /></S>],
  ["Notizie", <S><rect x="2" y="4" width="14" height="11" fill="#5ab6ea" /><rect x="3" y="6" width="5" height="4" fill="#e9f5fc" /><rect x="10" y="6" width="5" height="4" fill="#1d6aa5" /><path d="M3 12.500h12" stroke="#fff" /></S>],
  ["Esplora file", <S><path d="M1 3h6l2 2h8v11H1z" fill="#f5b93a" /><path d="M1 7h16v9H1z" fill="#ffd767" /><path d="M4 16v-5h10v5h-3v-2H7v2z" fill="#3f8fd6" /></S>, 1],
  ["Store", <S><path d="M6 5V2h6v3" fill="none" stroke="#4db5ef" strokeWidth="1.500" /><path d="M1 5h16v11a1 1 0 0 1-1 1H2a1 1 0 0 1-1-1z" fill="#f4f4f4" /><path d="M5 7h3.500v3.500H5z" fill="#f25022" /><path d="M9.500 7H13v3.500H9.500z" fill="#7fba00" /><path d="M5 11.500h3.500V15H5z" fill="#00a4ef" /><path d="M9.500 11.500H13V15H9.500z" fill="#ffb900" /></S>],
  ["Thunderbird", <S><circle cx="9" cy="9" r="8" fill="#1c6fd6" /><path d="M2 6c4-5 12-4 14 1-3-2-6-1-7 1s1 5 5 5c-5 4-12 0-12-7z" fill="#46a6f5" /><path d="M5 8l4-2 4 2-1 4-4 1-2-2z" fill="#fff" /></S>, 1],
  ["Firefox", <S><circle cx="9" cy="10" r="7.500" fill="#ff7139" /><path d="M9 2c5 1 8 4 7.500 9C14 6 10 7 9 2z" fill="#ffd43a" /><path d="M2 6c1-2 2-3 3-4 0 3 2 3 4 4z" fill="#ff3b5c" /><circle cx="9" cy="10" r="3.800" fill="#7542e5" /></S>, 1],
  ["Excel", <Letter l="X" dark="#107c41" light="#21a366" />, 2],
  ["Access", <Letter l="A" dark="#a4262c" light="#d13c4b" />],
  ["Word", <Letter l="W" dark="#185abd" light="#41a5ee" />, 1],
  ["Publisher", <Letter l="P" dark="#077568" light="#37c6b8" />],
  ["PowerPoint", <Letter l="P" dark="#c43e1c" light="#ed6c47" round />],
  ["TeamViewer", <S><rect x="1" y="1" width="16" height="16" rx="3" fill="#0e72ed" /><circle cx="9" cy="9" r="7" fill="#fff" /><path d="M3 9l4-3v2h4V6l4 3-4 3v-2H7v2z" fill="#0e72ed" /></S>],
  ["Telegram", <S><circle cx="9" cy="9" r="8" fill="#16405f" /><circle cx="9" cy="9" r="5.500" fill="#d8f0fb" /><path d="M4 2l7 3 3 9-6 2-3-4 4-1z" fill="#1aa0dc" /></S>, 1],
  ["Amazon Music", <S><rect x="1" y="0" width="16" height="18" fill="#25d1da" /><T x="9" y="8" fontSize="4" fill="#111">amazon</T><T x="9" y="13" fontSize="4" fill="#111">music</T></S>],
  ["Computer", <S><path d="M3 1l10 1 1 8-9 1z" fill="#dfe6ee" /><path d="M4.500 2.500l7.500.7.6 5.500-7 .8z" fill="#2847c8" /><path d="M6 12l7-1 3 3-8 3z" fill="#c5ced8" /><circle cx="12" cy="15" r="2" fill="#f4f4f4" /></S>],
  ["Skype", <S><circle cx="7" cy="7" r="6" fill="#00aff0" /><circle cx="11" cy="11" r="6" fill="#00aff0" /><T x="9" y="13" fontSize="11" fill="#fff">S</T></S>],
  ["Edge", <S><circle cx="9" cy="9" r="8" fill="#1b6fd0" /><path d="M1 8C2 2 10-1 15 4c4 4 1 8-3 7-3 0-1-2-2-4C8 4 3 4 1 8z" fill="#3fd08b" /><path d="M8 8c-2 4 2 8 7 6-4 4-10 2-10-3 0-2 1-3 3-3z" fill="#123f8d" /></S>],
  ["Opera", <S><ellipse cx="9" cy="9" rx="5.500" ry="6.800" fill="none" stroke="#ee1c2e" strokeWidth="3.400" /></S>],
  ["GIMP", <S><path d="M3 10c0-6 9-8 11-3l2 5v4H3z" fill="#e9dfcf" /><path d="M6 5l2-3 2 3zM11 5l3-2v4z" fill="#8d7b60" /><circle cx="8" cy="8" r="1.200" fill="#222" /><circle cx="12" cy="8" r="1.200" fill="#222" /><path d="M2 13h14l1 4H1z" fill="#f7f3ec" /><path d="M12 15h5v2h-5z" fill="#c22" /></S>],
  ["Scanner", <S><rect x="1" y="1" width="16" height="16" rx="1" fill="#2952b8" /><path d="M6 3h6l2 8H4z" fill="#fff" /><path d="M7.500 5h3l1 3h-5z" fill="#2952b8" /><path d="M3 13h12v2H3z" fill="#dfe7fb" /></S>],
  ["Acrobat", <S><rect x="1" y="1" width="16" height="16" rx="2" fill="#b30b00" /><path d="M4 14c4-3 5-7 4.500-10C10 9 12 11 15 11.500 11 11 7 12 4 14z" fill="none" stroke="#fff" strokeWidth="1.500" /></S>],
  ["CCleaner", <S><circle cx="9" cy="9" r="7.300" fill="#10242f" stroke="#21a8ea" strokeWidth="1.600" /><T x="9" y="13" fontSize="11" fontStyle="italic" fill="#21a8ea">C</T></S>],
  ["WhatsApp", <S><path d="M1.500 16l1.200-4A7 7 0 1 1 5.500 15z" fill="none" stroke="#25d366" strokeWidth="1.600" /><path d="M6 5c0 4 3 7 6 7l1-2-2-1-1 1c-1 0-2-2-2-3l1-1-1-2z" fill="#25d366" /><circle cx="14" cy="13" r="4" fill="#333" stroke="#bbb" strokeWidth=".8" /><T x="14" y="15.500" fontSize="6" fill="#fff">1</T></S>],
  ["iCloud", <S><rect x="0" y="1" width="18" height="16" rx="2" fill="#fafafa" /><path d="M4 13a3 3 0 0 1 0-5 4 4 0 0 1 7.500-1.500A3.300 3.300 0 0 1 13.500 13z" fill="#3a94f5" /></S>],
  ["Note", <S><path d="M2 1h14v16H2z" fill="#fdd800" /><path d="M9 9h7v4l-3 4H9z" fill="#39352c" /><path d="M13 13h3l-3 4z" fill="#fff3a0" /></S>],
  ["Foto", <S><rect x="1" y="1" width="16" height="16" rx="2" fill="#2a8de0" /><path d="M1 15l6-8 8 10H3a2 2 0 0 1-2-2z" fill="#0c59a8" /><path d="M7 17l5-6 5 5-1 1z" fill="#7cd0ff" /><circle cx="12.500" cy="5.500" r="2" fill="#fff" /></S>, 3],
];

function Taskbar() {
  return (
    <footer className="flex h-[27px] items-stretch bg-linear-to-r from-[#1f1d1c] via-[#352b24] via-60% to-[#111] text-[9px] text-white">
      {APPS.map(([name, icon, mark]) => (
        <button key={name} aria-label={name} className={"flex w-[33px] shrink-0 items-center justify-center border-b-2 " + (mark === 1 ? "border-[#76b9ed]" : mark === 2 ? "border-[#76b9ed] bg-[#565350]" : mark === 3 ? "border-[#e08a3c] bg-[#b4621f]" : "border-transparent")}>{icon}</button>
      ))}
      <div className="ml-auto flex items-center pr-[12px]">
        <svg viewBox="0 0 18 16" className="h-4 w-[18px]"><circle cx="10" cy="6" r="5" fill="#f7a72b" /><path d="M4 14a3.500 3.500 0 0 1 0-7 5 5 0 0 1 8 0 3.500 3.500 0 0 1 1 7z" fill="#c8dcf4" /></svg>
        <span className="ml-[4px] w-[96px] whitespace-nowrap">15°C&nbsp; Preval. nuvol.</span>
        <ChevronUp size={11} />
        <Volume2 size={11} className="ml-[4px]" />
        <time className="ml-[4px] flex w-[44px] flex-col items-center text-[8px] leading-[12px]"><span>10:21</span><span>20/02/2024</span></time>
        <span className="ml-[8px] flex">
          <svg viewBox="0 0 18 16" className="h-4 w-[18px]"><path d="M1 1h12v10H6l-2 2v-2H1z" fill="#fff" /><path d="M3 4h8M3 7h6" stroke="#333" /><circle cx="12" cy="11" r="4.200" fill="#222" stroke="#bbb" strokeWidth=".8" /><T x="12" y="13.500" fontSize="6.500" fill="#fff">6</T></svg>
        </span>
      </div>
    </footer>
  );
}

export default function App() {
  return (
    <main className="min-h-screen bg-white px-[73px] pt-[59px] font-['Open_Sans',sans-serif]">
      <p className="mb-[22px] font-['Liberation_Serif',serif] text-[21px] leading-[24px] text-black">
        Tabella pivot analisi singolo etf con medie, max e minimi (storico dal 2020, anno, sei mesi, tre mesi, 1 mese) analisi decadi, grafici e mesi dal 2020.
        <br />
        Possibilità di interagire per singolo etf selezionato.
      </p>
      <div className="overflow-hidden">
        <TitleBar />
        <Ribbon />
        <FormulaBar />
        <div className="flex bg-[#e6e6e6]">
          <div className="relative min-w-0 flex-1 overflow-hidden">
            <Sheet />
            <Chart />
          </div>
          <div className="flex w-[13px] flex-col items-center justify-between bg-[#dadada] pt-[2px]">
            <div className="flex flex-col">
              <button aria-label="Su" className="flex h-[10px] w-[9px] items-center justify-center border border-[#bbb] bg-white"><svg viewBox="0 0 6 4" className="h-[3px] w-[5px]"><path d="M0 4h6L3 0z" fill="#555" /></svg></button>
              <span className="h-[28px] w-[9px] border border-[#bbb] bg-white" />
            </div>
            <button aria-label="Giù" className="flex h-[10px] w-[9px] items-center justify-center border border-[#bbb] bg-white"><svg viewBox="0 0 6 4" className="h-[3px] w-[5px]"><path d="M0 0h6L3 4z" fill="#555" /></svg></button>
          </div>
        </div>
        <SheetTabs />
        <StatusBar />
        <Taskbar />
      </div>
    </main>
  );
}
